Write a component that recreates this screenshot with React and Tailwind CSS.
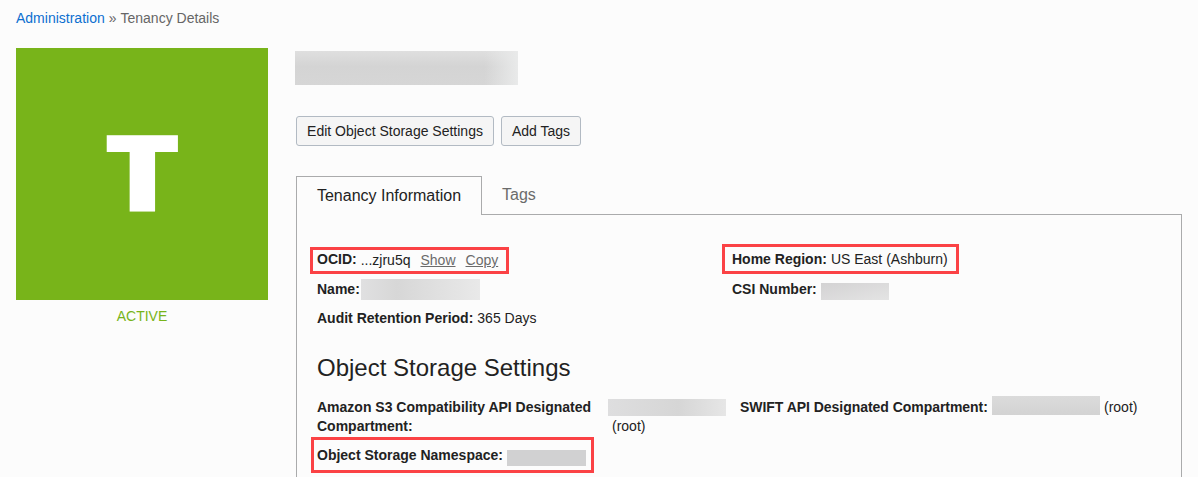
function Redacted({ className }) {
  return <span aria-hidden="true" className={`block shrink-0 ${className}`} />;
}

function Label({ className = "", children }) {
  return <span className={`shrink-0 font-bold whitespace-nowrap ${className}`}>{children}</span>;
}

function StatusTile() {
  return (
    <aside className="w-[252px] shrink-0">
      <div className="flex h-[252px] items-center justify-center bg-[#78b41a] pb-2">
        <span className="scale-x-[1.24] font-['Open_Sans',sans-serif] text-[106px] leading-none font-extrabold text-white">T</span>
      </div>
      <p className="pt-[6px] text-center leading-5 text-[#78b41a]">ACTIVE</p>
    </aside>
  );
}

function Tabs() {
  return (
    <div className="flex h-[39px] text-base">
      <button className="w-[186px] border-x border-t border-[#aaabac] text-[#222]">Tenancy Information</button>
      <div className="flex-1 border-b border-[#aaabac] pl-5">
        <button className="h-[37px] text-[#6b6b6b]">Tags</button>
      </div>
    </div>
  );
}

function TenancyInfo() {
  return (
    <div className="flex h-[89px] pl-[13px]">
      <div className="w-[412px]">
        <div className="mt-[3px] flex h-[27px] w-[199px] items-center border-3 border-[#fb4245] pl-1">
          <Label className="mr-1 -mt-[3px]">OCID:</Label>
          <span className="-mt-px">...zjru5q</span>
          <a className="-mt-px ml-[10px] text-[#6b6b6b] underline">Show</a>
          <a className="-mt-px ml-[10px] text-[#6b6b6b] underline">Copy</a>
        </div>
        <div className="flex h-[30px] items-center pl-[7px]">
          <Label className="w-[44px]">Name:</Label>
          <Redacted className="h-[21px] w-[119px] bg-linear-to-r from-[#e0e0e1] via-[#d7d7d7] via-30% to-[#e9e9e9]" />
        </div>
        <div className="flex h-7 items-center pl-[7px]">
          <Label className="mr-1">Audit Retention Period:</Label>
          <span>365 Days</span>
        </div>
      </div>
      <div>
        <div className="flex h-[30px] w-[237px] items-center border-3 border-[#fb4245] pl-[7px]">
          <Label className="mr-1">Home Region:</Label>
          <span className="whitespace-nowrap">US East (Ashburn)</span>
        </div>
        <div className="flex h-[30px] items-center pl-[10px]">
          <Label className="w-[89px]">CSI Number:</Label>
          <Redacted className="mt-1 h-[17px] w-[68px] bg-linear-to-br from-[#d3d2d3] to-[#e4e4e4]" />
        </div>
      </div>
    </div>
  );
}

function StorageSettings() {
  return (
    <section>
      <h2 className="mt-[19px] h-[46px] pl-5 text-2xl leading-[32px] text-[#222]">Object Storage Settings</h2>
      <div className="flex h-[39px] pl-5 leading-[19px]">
        <Label className="w-[291px]">
          Amazon S3 Compatibility API Designated
          <br />
          Compartment:
        </Label>
        <div className="w-[132px]">
          <Redacted className="mt-px mb-px h-[17px] w-[118px] bg-linear-to-r from-[#dededf] via-[#d6d6d6] via-60% to-[#e6e6e6]" />
          <span className="pl-1">(root)</span>
        </div>
        <Label className="w-[252px] tracking-[-0.04px]">SWIFT API Designated Compartment:</Label>
        <Redacted className="-mt-[2px] mr-1 h-[19px] w-[108px] bg-linear-to-b from-[#dbdbdb] to-[#d3d3d3]" />
        <span>(root)</span>
      </div>
      <div className="ml-[14px] flex h-[36px] w-[283px] items-center border-3 border-[#fb4245] pl-[3px]">
        <Label className="w-[191px]">Object Storage Namespace:</Label>
        <Redacted className="mt-[5px] -ml-px h-4 w-[79px] bg-[#d1d1d2]" />
      </div>
    </section>
  );
}

export default function App() {
  return (
    <div className="h-[477px] w-[1198px] overflow-hidden bg-[#fcfcfc] px-4 font-['Liberation_Sans',Arial,sans-serif] text-sm text-[#222]">
      <nav className="flex h-[48px] gap-1 pt-2 leading-5 text-[#666]">
        <a className="text-[#0c6fd0]">Administration</a>
        <span>»</span>
        <span>Tenancy Details</span>
      </nav>
      <div className="flex gap-7">
        <StatusTile />
        <main className="w-[886px] shrink-0">
          <div className="-ml-px mt-[3px] h-[34px] w-[223px] bg-linear-to-b from-[#dfdfdf] via-[#d4d4d4] via-45% to-[#d6d6d6]">
            <Redacted className="h-full bg-linear-to-r from-transparent from-85% to-[#e9eaea]" />
          </div>
          <div className="mt-[31px] mb-[30px] flex h-[30px] gap-[7px]">
            <button className="w-[198px] rounded-[3px] border border-[#b2bac3] bg-[#f5f5f5]">Edit Object Storage Settings</button>
            <button className="w-20 rounded-[3px] border border-[#b2bac3] bg-[#f5f5f5]">Add Tags</button>
          </div>
          <Tabs />
          <div className="h-[300px] border-x border-[#aaabac] pt-[29px]">
            <TenancyInfo />
            <StorageSettings />
          </div>
        </main>
      </div>
    </div>
  );
}
